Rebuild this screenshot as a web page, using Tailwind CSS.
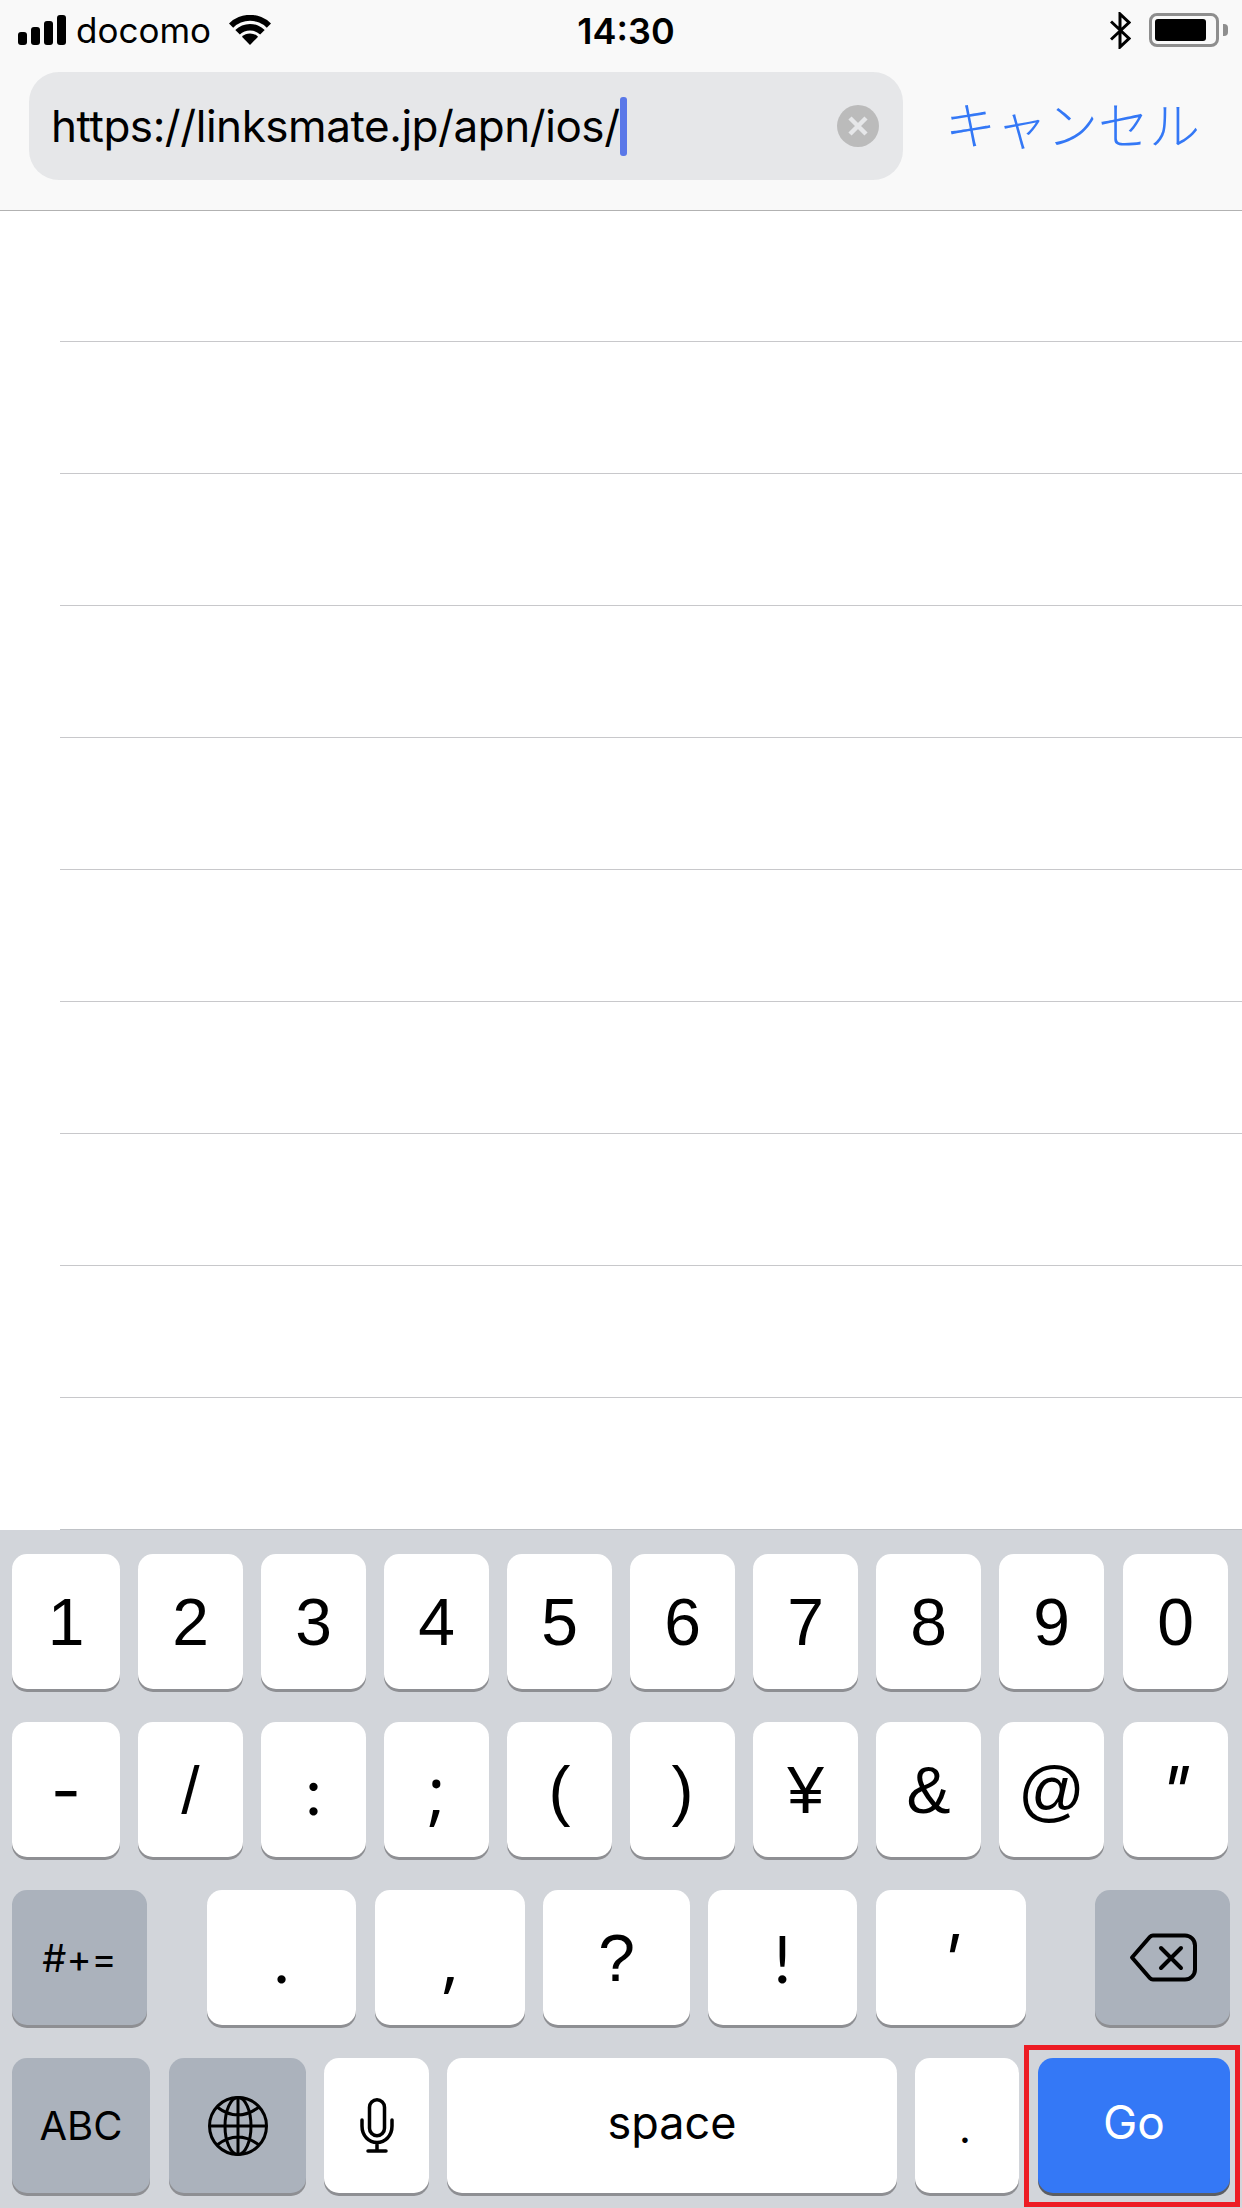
<!DOCTYPE html>
<html lang="ja">
<head>
<meta charset="utf-8">
<title>URL</title>
<script src="https://cdn.jsdelivr.net/npm/@tailwindcss/browser@4"></script>
</head>
<body class="m-0 bg-white">
<div class="relative flex h-[2208px] w-[1242px] flex-col overflow-hidden bg-white font-['Inter','Noto_Sans_CJK_JP',sans-serif] text-black">

  <!-- Top bar -->
  <header class="h-[211px] shrink-0 border-b border-[#b2b2b2] bg-[#f9f9f9]">
    <div class="grid h-[72px] grid-cols-3 items-start">
      <div class="flex items-start pl-[18px] pt-[15px]">
        <div class="flex h-[30px] items-end gap-[4px]">
          <span class="h-[13px] w-[9px] rounded-[3px] bg-black"></span>
          <span class="h-[18px] w-[9px] rounded-[3px] bg-black"></span>
          <span class="h-[24px] w-[9px] rounded-[3px] bg-black"></span>
          <span class="h-[30px] w-[9px] rounded-[3px] bg-black"></span>
        </div>
        <span class="ml-[10px] text-[35px] leading-[30px]">docomo</span>
        <svg class="ml-[18px]" width="42" height="30" viewBox="0 0 42 30" fill="#000"><path d="M0 8.4A30 30 0 0 1 42 8.4L37.8 12.7A24 24 0 0 0 4.2 12.7Z"/><path d="M6.3 14.9A21 21 0 0 1 35.7 14.9L31.15 19.6A14.5 14.5 0 0 0 10.85 19.6Z"/><path d="M21 30L12.95 21.7A11.5 11.5 0 0 1 29.05 21.7Z"/></svg>
      </div>
      <div class="pl-[10px] pt-[16px] text-center text-[36px] font-semibold leading-[30px]">14:30</div>
      <div class="flex items-start justify-end pr-[14px] pt-[12px]">
        <svg width="21" height="37" viewBox="0 0 21 37" fill="none" stroke="#000" stroke-width="3"><path d="M1 9.5L19 26.5L10 35V2L19 10.5L1 27.5"/></svg>
        <div class="ml-[18px] mt-[1px] flex h-[34px] w-[70px] items-center rounded-[8px] border-[3px] border-[#8e8e8e] pl-[3px]">
          <span class="h-[22px] w-[51px] rounded-[3px] bg-black"></span>
        </div>
        <span class="ml-[4px] mt-[12px] h-[12px] w-[5px] rounded-r-[4px] bg-[#8e8e8e]"></span>
      </div>
    </div>
    <div class="flex items-center pl-[29px]">
      <div class="flex h-[108px] w-[874px] items-center rounded-[30px] bg-[#e6e7e9] pl-[22px] pr-[24px]">
        <span class="text-[44px] leading-none tracking-[-0.45px]">https://linksmate.jp/apn/ios/</span>
        <span class="h-[59px] w-[7px] rounded-[3px] bg-[#5a78e8]"></span>
        <svg class="ml-auto" width="42" height="42" viewBox="0 0 42 42"><circle cx="21" cy="21" r="21" fill="#bbbbbb"/><path d="M13 13L29 29M29 13L13 29" stroke="#e6e7e9" stroke-width="4.5"/></svg>
      </div>
      <span class="mb-[6px] ml-[42px] font-['Noto_Sans_CJK_JP',sans-serif] text-[51px] font-light leading-none text-[#3478f6]">キャンセル</span>
    </div>
  </header>

  <!-- Empty list -->
  <main class="flex shrink-0 flex-col pl-[60px]">
    <div class="h-[131px] border-b border-[#c8c8cb]"></div>
    <div class="h-[132px] border-b border-[#c8c8cb]"></div>
    <div class="h-[132px] border-b border-[#c8c8cb]"></div>
    <div class="h-[132px] border-b border-[#c8c8cb]"></div>
    <div class="h-[132px] border-b border-[#c8c8cb]"></div>
    <div class="h-[132px] border-b border-[#c8c8cb]"></div>
    <div class="h-[132px] border-b border-[#c8c8cb]"></div>
    <div class="h-[132px] border-b border-[#c8c8cb]"></div>
    <div class="h-[132px] border-b border-[#c8c8cb]"></div>
    <div class="h-[132px] border-b border-[#bfc2c6]"></div>
  </main>

  <!-- Keyboard -->
  <section class="flex flex-1 flex-col gap-[33px] bg-[#d2d5da] pl-[12px] pt-[24px] font-['Liberation_Sans',sans-serif] text-[66px] leading-none">
    <div class="flex gap-[18px]">
      <div class="flex h-[135px] w-[108px] items-center justify-center rounded-[15px] bg-white shadow-[0_3px_0_#8e8f93]">1</div>
      <div class="flex h-[135px] w-[105px] items-center justify-center rounded-[15px] bg-white shadow-[0_3px_0_#8e8f93]">2</div>
      <div class="flex h-[135px] w-[105px] items-center justify-center rounded-[15px] bg-white shadow-[0_3px_0_#8e8f93]">3</div>
      <div class="flex h-[135px] w-[105px] items-center justify-center rounded-[15px] bg-white shadow-[0_3px_0_#8e8f93]">4</div>
      <div class="flex h-[135px] w-[105px] items-center justify-center rounded-[15px] bg-white shadow-[0_3px_0_#8e8f93]">5</div>
      <div class="flex h-[135px] w-[105px] items-center justify-center rounded-[15px] bg-white shadow-[0_3px_0_#8e8f93]">6</div>
      <div class="flex h-[135px] w-[105px] items-center justify-center rounded-[15px] bg-white shadow-[0_3px_0_#8e8f93]">7</div>
      <div class="flex h-[135px] w-[105px] items-center justify-center rounded-[15px] bg-white shadow-[0_3px_0_#8e8f93]">8</div>
      <div class="flex h-[135px] w-[105px] items-center justify-center rounded-[15px] bg-white shadow-[0_3px_0_#8e8f93]">9</div>
      <div class="ml-[1px] flex h-[135px] w-[105px] items-center justify-center rounded-[15px] bg-white shadow-[0_3px_0_#8e8f93]">0</div>
    </div>
    <div class="flex gap-[18px]">
      <div class="flex h-[135px] w-[108px] items-center justify-center rounded-[15px] bg-white font-['Inter',sans-serif] shadow-[0_3px_0_#8e8f93]">-</div>
      <div class="flex h-[135px] w-[105px] items-center justify-center rounded-[15px] bg-white shadow-[0_3px_0_#8e8f93]">/</div>
      <div class="flex h-[135px] w-[105px] items-center justify-center rounded-[15px] bg-white font-['Lato',sans-serif] shadow-[0_3px_0_#8e8f93]">:</div>
      <div class="flex h-[135px] w-[105px] items-center justify-center rounded-[15px] bg-white font-['Open_Sans',sans-serif] text-[70px] shadow-[0_3px_0_#8e8f93]">;</div>
      <div class="flex h-[135px] w-[105px] items-center justify-center rounded-[15px] bg-white shadow-[0_3px_0_#8e8f93]">(</div>
      <div class="flex h-[135px] w-[105px] items-center justify-center rounded-[15px] bg-white shadow-[0_3px_0_#8e8f93]">)</div>
      <div class="flex h-[135px] w-[105px] items-center justify-center rounded-[15px] bg-white shadow-[0_3px_0_#8e8f93]">¥</div>
      <div class="flex h-[135px] w-[105px] items-center justify-center rounded-[15px] bg-white shadow-[0_3px_0_#8e8f93]">&amp;</div>
      <div class="flex h-[135px] w-[105px] items-center justify-center rounded-[15px] bg-white shadow-[0_3px_0_#8e8f93]">@</div>
      <div class="ml-[1px] flex h-[135px] w-[105px] items-center justify-center rounded-[15px] bg-white font-['Inter',sans-serif] shadow-[0_3px_0_#8e8f93]"><span class="-skew-x-12">"</span></div>
    </div>
    <div class="flex">
      <div class="flex h-[135px] w-[135px] items-center justify-center rounded-[15px] bg-[#abb2bc] font-['Inter',sans-serif] text-[38px] shadow-[0_3px_0_#8e8f93]">#+=</div>
      <div class="ml-[60px] flex h-[135px] w-[149px] items-center justify-center rounded-[15px] bg-white font-['Lato',sans-serif] shadow-[0_3px_0_#8e8f93]">.</div>
      <div class="ml-[19px] flex h-[135px] w-[150px] items-center justify-center rounded-[15px] bg-white font-['Open_Sans',sans-serif] text-[70px] shadow-[0_3px_0_#8e8f93]">,</div>
      <div class="ml-[18px] flex h-[135px] w-[147px] items-center justify-center rounded-[15px] bg-white shadow-[0_3px_0_#8e8f93]">?</div>
      <div class="ml-[18px] flex h-[135px] w-[149px] items-center justify-center rounded-[15px] bg-white font-['Lato',sans-serif] shadow-[0_3px_0_#8e8f93]">!</div>
      <div class="ml-[19px] flex h-[135px] w-[150px] items-center justify-center rounded-[15px] bg-white font-['Inter',sans-serif] shadow-[0_3px_0_#8e8f93]"><span class="-skew-x-12">'</span></div>
      <div class="ml-[69px] flex h-[135px] w-[135px] items-center justify-center rounded-[15px] bg-[#abb2bc] shadow-[0_3px_0_#8e8f93]">
        <svg width="68" height="49" viewBox="0 0 68 49" fill="none" stroke="#000" stroke-width="4" stroke-linecap="round" stroke-linejoin="round"><path d="M24 2.5H56a10 10 0 0 1 10 10V36.500a10 10 0 0 1-10 10H24a4 4 0 0 1-3-1.300L3 24.500L21 3.800a4 4 0 0 1 3-1.300Z"/><path d="M32 15L52 35M52 15L32 35"/></svg>
      </div>
    </div>
    <div class="flex font-['Inter',sans-serif] text-[45px]">
      <div class="flex h-[135px] w-[138px] items-center justify-center rounded-[15px] bg-[#abb2bc] text-[40px] shadow-[0_3px_0_#8e8f93]">ABC</div>
      <div class="ml-[19px] flex h-[135px] w-[137px] items-center justify-center rounded-[15px] bg-[#abb2bc] shadow-[0_3px_0_#8e8f93]">
        <svg width="60" height="60" viewBox="0 0 60 60" fill="none" stroke="#000" stroke-width="3"><circle cx="30" cy="30" r="28.500"/><ellipse cx="30" cy="30" rx="13" ry="28.500"/><path d="M30 1.500V58.500M1.500 30H58.500M9 11Q30 27 51 11M9 49Q30 33 51 49"/></svg>
      </div>
      <div class="ml-[18px] flex h-[135px] w-[105px] items-center justify-center rounded-[15px] bg-white shadow-[0_3px_0_#8e8f93]">
        <svg width="34" height="55" viewBox="0 0 34 55" fill="none" stroke="#000" stroke-width="3.500" stroke-linecap="round"><rect x="9.500" y="1.750" width="15" height="36" rx="7.500"/><path d="M2 22V28C2 38 9 44.500 17 44.500C25 44.500 32 38 32 28V22M17 44.500V53M8 53H26"/></svg>
      </div>
      <div class="ml-[18px] flex h-[135px] w-[450px] items-center justify-center rounded-[15px] bg-white pb-[7px] shadow-[0_3px_0_#8e8f93]">space</div>
      <div class="ml-[18px] flex h-[135px] w-[104px] items-center justify-center rounded-[15px] bg-white pr-[4px] font-['Lato',sans-serif] text-[44px] shadow-[0_3px_0_#8e8f93]">.</div>
      <div class="ml-[19px] flex h-[135px] w-[192px] items-center justify-center rounded-[15px] bg-[#3478f6] pb-[8px] text-[46px] text-white shadow-[0_3px_0_#5c5e63]">Go</div>
    </div>
  </section>

  <!-- Red annotation box -->
  <div class="absolute left-[1024px] top-[2045px] h-[162px] w-[216px] border-[5px] border-[#ed1c24]"></div>
</div>
</body>
</html>
